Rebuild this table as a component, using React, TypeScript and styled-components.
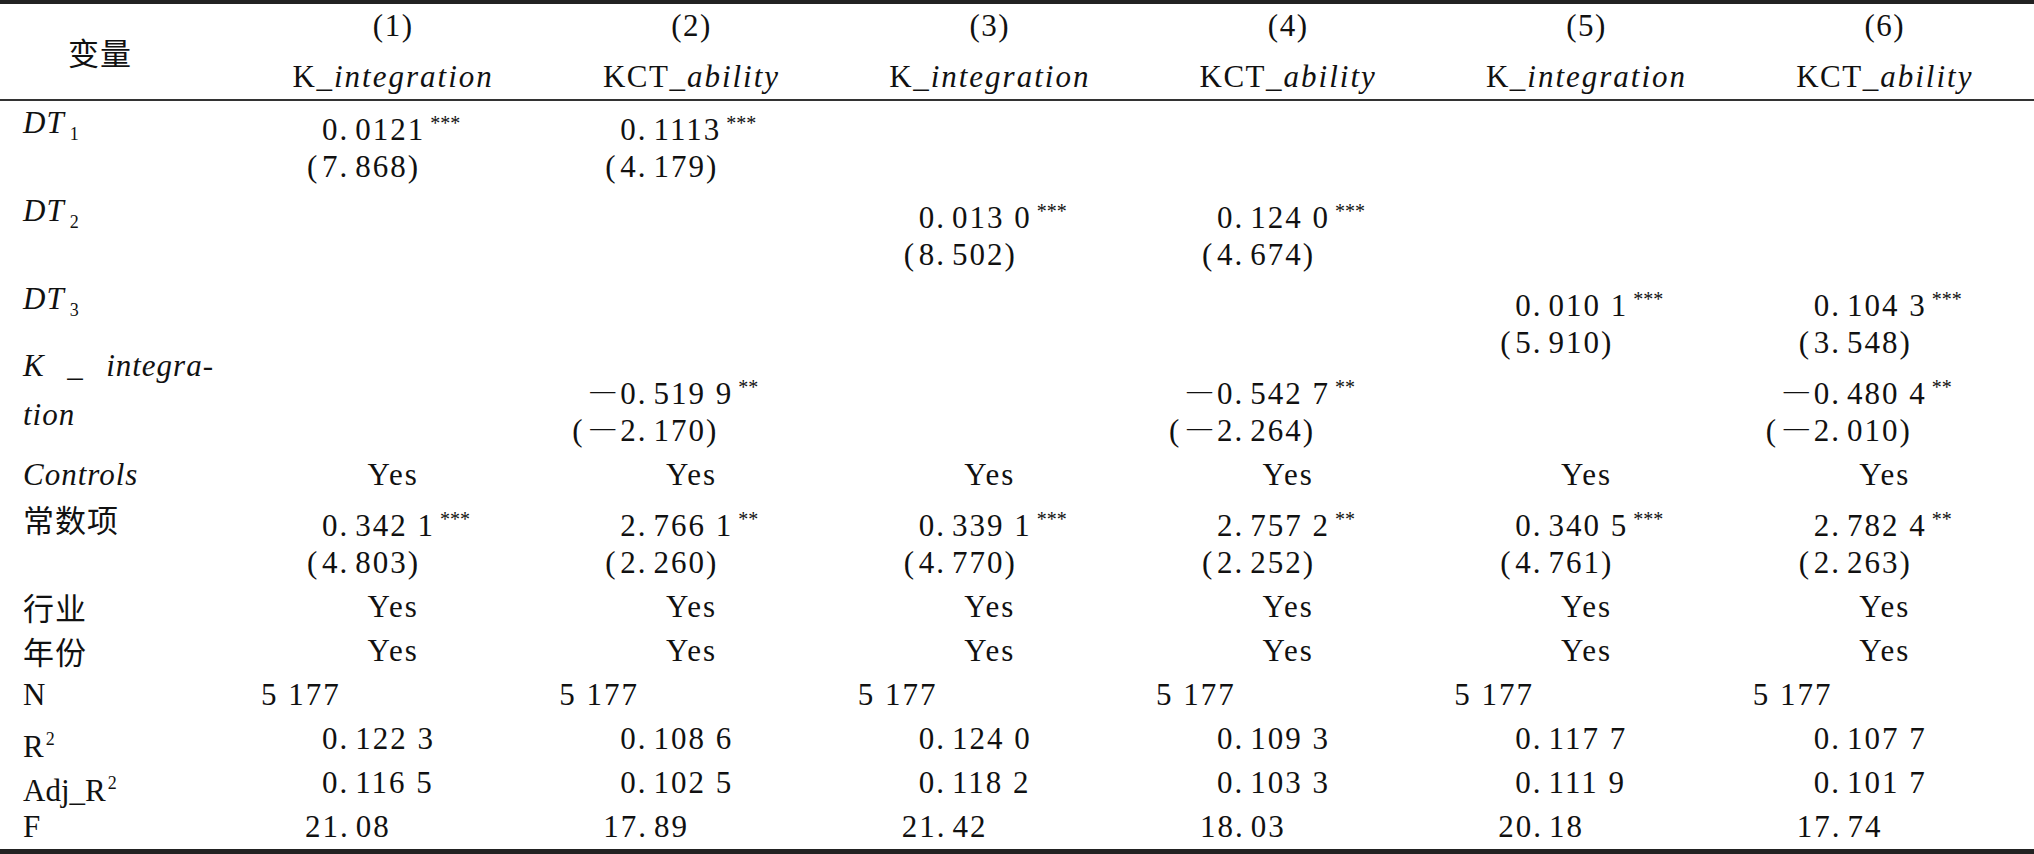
import React from 'react';
import styled, { createGlobalStyle } from 'styled-components';

const GlobalStyle = createGlobalStyle`
  html, body { margin: 0; padding: 0; background: #fff; }
  body {
    font-family: "Liberation Serif", "Noto Sans CJK SC", serif;
    color: #111;
  }
`;

const COLS = '244px repeat(6, 1fr)';
const LINE = 44;
const PAREN_W = 15;
const MINUS_W = 33;

const Table = styled.div`
  width: 2034px;
  border-top: 4px solid #222;
  border-bottom: 5px solid #222;
  font-size: 31px;
`;

const HeaderRow = styled.div`
  display: grid;
  grid-template-columns: ${COLS};
  border-bottom: 2px solid #333;
`;

const HeadLabel = styled.div`
  display: flex;
  align-items: center;
  padding-left: 68px;
  font-family: "Noto Sans CJK SC", sans-serif;
  letter-spacing: 1px;
`;

const HeadCell = styled.div`
  display: flex;
  flex-direction: column;
  align-items: center;
  gap: 7px;
`;

const HeadLine = styled.div`
  height: ${LINE}px;
  line-height: ${LINE}px;
  white-space: nowrap;
  letter-spacing: 1.5px;
`;

const Italic = styled.span`
  font-style: italic;
  letter-spacing: 2px;
`;

const BodyRow = styled.div<{ $lines: number }>`
  display: grid;
  grid-template-columns: ${COLS};
  min-height: ${(p) => p.$lines * LINE}px;
`;

const LabelCell = styled.div`
  padding-left: 23px;
  height: ${LINE}px;
  line-height: ${LINE}px;
  white-space: nowrap;
`;

const CjkLabel = styled(LabelCell)`
  font-family: "Noto Sans CJK SC", sans-serif;
  letter-spacing: 1px;
`;

const ItalicLabel = styled(LabelCell)`
  font-style: italic;
  letter-spacing: 1px;
`;

const WrapLabel = styled.div`
  padding-left: 23px;
  margin-top: -24px;
  line-height: 49px;
  font-style: italic;
  letter-spacing: 1px;
`;

const SpreadLine = styled.div`
  display: flex;
  justify-content: space-between;
  width: 191px;
`;

const Sub = styled.span`
  font-size: 18px;
  font-style: normal;
  vertical-align: -7px;
  margin-left: 5px;
`;

const Sup = styled.span`
  font-size: 18px;
  vertical-align: 12px;
  margin-left: 2px;
`;

const ValueCell = styled.div`
  display: flex;
  flex-direction: column;
`;

const Line = styled.div<{ $pad?: number; $center?: boolean }>`
  height: ${LINE}px;
  line-height: ${LINE}px;
  white-space: nowrap;
  padding-left: ${(p) => (p.$center ? 0 : p.$pad ?? 78)}px;
  text-align: ${(p) => (p.$center ? 'center' : 'left')};
  letter-spacing: 2px;
`;

const Hang = styled.span<{ $w: number }>`
  display: inline-block;
  width: ${(p) => p.$w}px;
  margin-left: -${(p) => p.$w}px;
  white-space: nowrap;
  letter-spacing: 0;
`;

const OpenParen = styled.span`
  display: inline-block;
  width: ${PAREN_W}px;
  text-align: left;
`;

const Minus = styled.span`
  display: inline-block;
  width: ${MINUS_W}px;
  padding-left: 3px;
  box-sizing: border-box;
  text-align: left;
  font-size: 25px;
  line-height: 25px;
  vertical-align: 5px;
`;

const Dot = styled.span`
  margin-right: 6px;
`;

const Stars = styled.span`
  font-size: 20px;
  letter-spacing: 0;
  vertical-align: 10px;
  margin-left: 5px;
`;

type Cell =
  | null
  | { kind: 'coef'; v: string; s: string; t: string }
  | { kind: 'yes' }
  | { kind: 'text'; text: string; pad: number };

const coef = (v: string, s: string, t: string): Cell => ({ kind: 'coef', v, s, t });
const yes: Cell = { kind: 'yes' };
const txt = (text: string, pad: number): Cell => ({ kind: 'text', text, pad });

const Digits: React.FC<{ text: string }> = ({ text }) => {
  const i = text.indexOf('.');
  if (i < 0) return <>{text}</>;
  return (
    <>
      {text.slice(0, i)}
      <Dot>.</Dot>
      {text.slice(i + 1)}
    </>
  );
};

const NumberLine: React.FC<{ value: string; paren?: boolean; stars?: string }> = ({ value, paren, stars }) => {
  const neg = value.startsWith('-');
  const digits = neg ? value.slice(1) : value;
  const w = (paren ? PAREN_W : 0) + (neg ? MINUS_W : 0);
  return (
    <Line>
      {w > 0 && (
        <Hang $w={w}>
          {paren && <OpenParen>(</OpenParen>}
          {neg && <Minus>—</Minus>}
        </Hang>
      )}
      <Digits text={digits} />
      {paren && ')'}
      {stars && <Stars>{stars}</Stars>}
    </Line>
  );
};

const renderCell = (c: Cell, key: number) => {
  if (!c) {
    return <ValueCell key={key} />;
  }
  if (c.kind === 'coef') {
    return (
      <ValueCell key={key}>
        <NumberLine value={c.v} stars={c.s} />
        <NumberLine value={c.t} paren />
      </ValueCell>
    );
  }
  if (c.kind === 'yes') {
    return (
      <ValueCell key={key}>
        <Line $center>Yes</Line>
      </ValueCell>
    );
  }
  return (
    <ValueCell key={key}>
      <Line $pad={c.pad}>
        <Digits text={c.text} />
      </Line>
    </ValueCell>
  );
};

const DT: React.FC<{ n: number }> = ({ n }) => (
  <ItalicLabel>
    DT<Sub>{n}</Sub>
  </ItalicLabel>
);

type Row = { label: React.ReactNode; lines: number; cells: Cell[] };

const six = (c: Cell): Cell[] => [c, c, c, c, c, c];

const rows: Row[] = [
  {
    label: <DT n={1} />,
    lines: 2,
    cells: [coef('0.0121', '***', '7.868'), coef('0.1113', '***', '4.179'), null, null, null, null],
  },
  {
    label: <DT n={2} />,
    lines: 2,
    cells: [null, null, coef('0.013 0', '***', '8.502'), coef('0.124 0', '***', '4.674'), null, null],
  },
  {
    label: <DT n={3} />,
    lines: 2,
    cells: [null, null, null, null, coef('0.010 1', '***', '5.910'), coef('0.104 3', '***', '3.548')],
  },
  {
    label: (
      <WrapLabel>
        <SpreadLine>
          <span>K</span>
          <span>_</span>
          <span>integra-</span>
        </SpreadLine>
        <div>tion</div>
      </WrapLabel>
    ),
    lines: 2,
    cells: [
      null,
      coef('-0.519 9', '**', '-2.170'),
      null,
      coef('-0.542 7', '**', '-2.264'),
      null,
      coef('-0.480 4', '**', '-2.010'),
    ],
  },
  { label: <ItalicLabel>Controls</ItalicLabel>, lines: 1, cells: six(yes) },
  {
    label: <CjkLabel>常数项</CjkLabel>,
    lines: 2,
    cells: [
      coef('0.342 1', '***', '4.803'),
      coef('2.766 1', '**', '2.260'),
      coef('0.339 1', '***', '4.770'),
      coef('2.757 2', '**', '2.252'),
      coef('0.340 5', '***', '4.761'),
      coef('2.782 4', '**', '2.263'),
    ],
  },
  { label: <CjkLabel>行业</CjkLabel>, lines: 1, cells: six(yes) },
  { label: <CjkLabel>年份</CjkLabel>, lines: 1, cells: six(yes) },
  { label: <LabelCell>N</LabelCell>, lines: 1, cells: six(txt('5 177', 17)) },
  {
    label: (
      <LabelCell>
        R<Sup>2</Sup>
      </LabelCell>
    ),
    lines: 1,
    cells: ['0.122 3', '0.108 6', '0.124 0', '0.109 3', '0.117 7', '0.107 7'].map((v) => txt(v, 78)),
  },
  {
    label: (
      <LabelCell>
        Adj_R<Sup>2</Sup>
      </LabelCell>
    ),
    lines: 1,
    cells: ['0.116 5', '0.102 5', '0.118 2', '0.103 3', '0.111 9', '0.101 7'].map((v) => txt(v, 78)),
  },
  {
    label: <LabelCell>F</LabelCell>,
    lines: 1,
    cells: ['21.08', '17.89', '21.42', '18.03', '20.18', '17.74'].map((v) => txt(v, 61)),
  },
];

const headers = [
  ['(1)', 'K', '_integration'],
  ['(2)', 'KCT', '_ability'],
  ['(3)', 'K', '_integration'],
  ['(4)', 'KCT', '_ability'],
  ['(5)', 'K', '_integration'],
  ['(6)', 'KCT', '_ability'],
];

export default function App() {
  return (
    <>
      <GlobalStyle />
      <Table>
        <HeaderRow>
          <HeadLabel>变量</HeadLabel>
          {headers.map(([num, pre, rest]) => (
            <HeadCell key={num}>
              <HeadLine>{num}</HeadLine>
              <HeadLine>
                {pre}
                <Italic>{rest}</Italic>
              </HeadLine>
            </HeadCell>
          ))}
        </HeaderRow>
        {rows.map((r, i) => (
          <BodyRow key={i} $lines={r.lines}>
            {r.label}
            {r.cells.map((c, j) => renderCell(c, j))}
          </BodyRow>
        ))}
      </Table>
    </>
  );
}
